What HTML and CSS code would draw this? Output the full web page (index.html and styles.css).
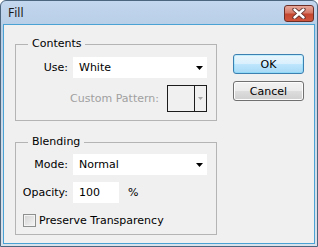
FILE: index.html
```html
<!DOCTYPE html>
<html>
<head>
<meta charset="utf-8">
<title>Fill</title>
<link rel="stylesheet" href="styles.css">
</head>
<body>
<div class="window">
  <div class="titlebar">
    <span class="title">Fill</span>
    <div class="close">
      <svg width="14" height="11" viewBox="0 0 14 11">
        <path d="M2.5 1.5 L11.5 9.5 M11.5 1.5 L2.5 9.5" stroke="#5b2e2a" stroke-width="4.2" stroke-linecap="round"/>
        <path d="M2.5 1.5 L11.5 9.5 M11.5 1.5 L2.5 9.5" stroke="#ffffff" stroke-width="2.4" stroke-linecap="round"/>
      </svg>
    </div>
  </div>
  <div class="panel">
    <div class="groups">
      <fieldset class="group">
        <legend>Contents</legend>
        <div class="field">
          <span class="label">Use:</span>
          <div class="select"><span>White</span><svg class="arrow" width="7" height="4" viewBox="0 0 7 4"><path d="M0 0H7L3.5 4Z" fill="#000"/></svg></div>
        </div>
        <div class="pattern-row">
          <span class="label disabled">Custom Pattern:</span>
          <div class="pattern">
            <div class="swatch"></div>
            <div class="pattern-btn"><svg width="5" height="3" viewBox="0 0 5 3"><path d="M0 0H5L2.5 3Z" fill="#a8a8a8"/></svg></div>
          </div>
        </div>
      </fieldset>
      <fieldset class="group blending">
        <legend>Blending</legend>
        <div class="field">
          <span class="label">Mode:</span>
          <div class="select"><span>Normal</span><svg class="arrow" width="7" height="4" viewBox="0 0 7 4"><path d="M0 0H7L3.5 4Z" fill="#000"/></svg></div>
        </div>
        <div class="field gap">
          <span class="label">Opacity:</span>
          <div class="opacity"><div class="input">100</div><span class="pct">%</span></div>
        </div>
        <div class="check-row">
          <span class="checkbox"></span>
          <span>Preserve Transparency</span>
        </div>
      </fieldset>
    </div>
    <div class="buttons">
      <div class="btn default">OK</div>
      <div class="btn">Cancel</div>
    </div>
  </div>
</div>
</body>
</html>
```
FILE: styles.css
```css
html, body {
  margin: 0;
  padding: 0;
}
body {
  background: #ffffff;
  font-family: "DejaVu Sans", Verdana, sans-serif;
  font-size: 11px;
  color: #000;
}
.window {
  width: 318px;
  height: 247px;
  box-sizing: border-box;
  border: 1px solid #4d6680;
  border-radius: 6px 6px 0 0;
  background: linear-gradient(#c3d7ee 0%, #b6cde6 12%, #cfdbe8 60%, #d9e1ea 100%);
  display: flex;
  flex-direction: column;
  overflow: hidden;
}
.titlebar {
  height: 23px;
  flex: none;
  display: flex;
  align-items: flex-start;
  justify-content: space-between;
  padding-left: 7px;
}
.title {
  font-family: "Noto Sans", "Open Sans", sans-serif;
  font-size: 12px;
  line-height: 14px;
  margin-top: 5px;
  color: #1a1a1a;
}
.close {
  width: 30px;
  height: 17px;
  box-sizing: border-box;
  margin-top: 4px;
  margin-right: 3px;
  border: 1px solid #6b2f28;
  border-radius: 3px;
  background: linear-gradient(#e8a89a 0%, #d67a68 45%, #c4462f 55%, #d0553c 100%);
  display: flex;
  align-items: center;
  justify-content: center;
}
.panel {
  flex: 1;
  margin: 0 2px 2px;
  border: 1px solid #4aa2d4;
  background: #f0f0f0;
  display: flex;
  padding-top: 12px;
}
.groups {
  margin-left: 11px;
  display: flex;
  flex-direction: column;
}
.group {
  width: 202px;
  box-sizing: border-box;
  margin: 0;
  padding: 6px 9px 8px 0;
  border: 1px solid #b4b4b4;
  min-inline-size: 0;
}
.group legend {
  margin-left: 12px;
  padding: 0 4px;
  line-height: 14px;
}
.blending {
  margin-top: 14px;
  padding-top: 5px;
  padding-bottom: 7px;
}
.field {
  display: grid;
  grid-template-columns: 52px 1fr;
  column-gap: 5px;
  align-items: center;
  height: 21px;
}
.field.gap {
  margin-top: 7px;
}
.label {
  text-align: right;
  white-space: nowrap;
}
.disabled {
  color: #a0a0a0;
}
.select {
  height: 21px;
  background: #fff;
  display: flex;
  align-items: center;
  justify-content: space-between;
  padding: 0 4px 0 6px;
}
.arrow {
  display: block;
}
.pattern-row {
  margin-top: 7px;
  height: 27px;
  display: flex;
  align-items: center;
  justify-content: flex-end;
  gap: 8px;
}
.pattern {
  width: 40px;
  height: 27px;
  box-sizing: border-box;
  border: 1px solid #1c1c1c;
  display: flex;
}
.swatch {
  width: 26px;
  border-right: 1px solid #1c1c1c;
}
.pattern-btn {
  flex: 1;
  display: flex;
  align-items: center;
  justify-content: center;
}
.pattern-btn svg {
  display: block;
}
.opacity {
  display: flex;
  align-items: center;
  gap: 9px;
}
.input {
  width: 46px;
  height: 21px;
  box-sizing: border-box;
  background: #fff;
  padding-left: 6px;
  line-height: 21px;
}
.check-row {
  margin-top: 11px;
  margin-left: 7px;
  height: 13px;
  display: flex;
  align-items: center;
  gap: 3px;
}
.checkbox {
  width: 13px;
  height: 13px;
  box-sizing: border-box;
  border: 1px solid #8e8f8f;
  background: linear-gradient(135deg, #d2d2d2, #f6f6f6);
  box-shadow: inset 0 0 0 1px #f4f4f4;
}
.buttons {
  margin-left: 16px;
  margin-top: 17px;
  display: flex;
  flex-direction: column;
  gap: 7px;
}
.btn {
  width: 71px;
  height: 20px;
  box-sizing: border-box;
  border: 1px solid #707070;
  border-radius: 3px;
  background: linear-gradient(#f2f2f2 0%, #ebebeb 49%, #dddddd 51%, #cfcfcf 100%);
  box-shadow: inset 0 0 0 1px #fcfcfc;
  display: flex;
  align-items: center;
  justify-content: center;
  font-size: 11px;
}
.btn.default {
  border-color: #3c7fb1;
  background: linear-gradient(#eaf6fd 0%, #d9f0fc 49%, #bee6fd 51%, #a7d9f5 100%);
  box-shadow: inset 0 0 0 1px #48d6fb40;
}
```
